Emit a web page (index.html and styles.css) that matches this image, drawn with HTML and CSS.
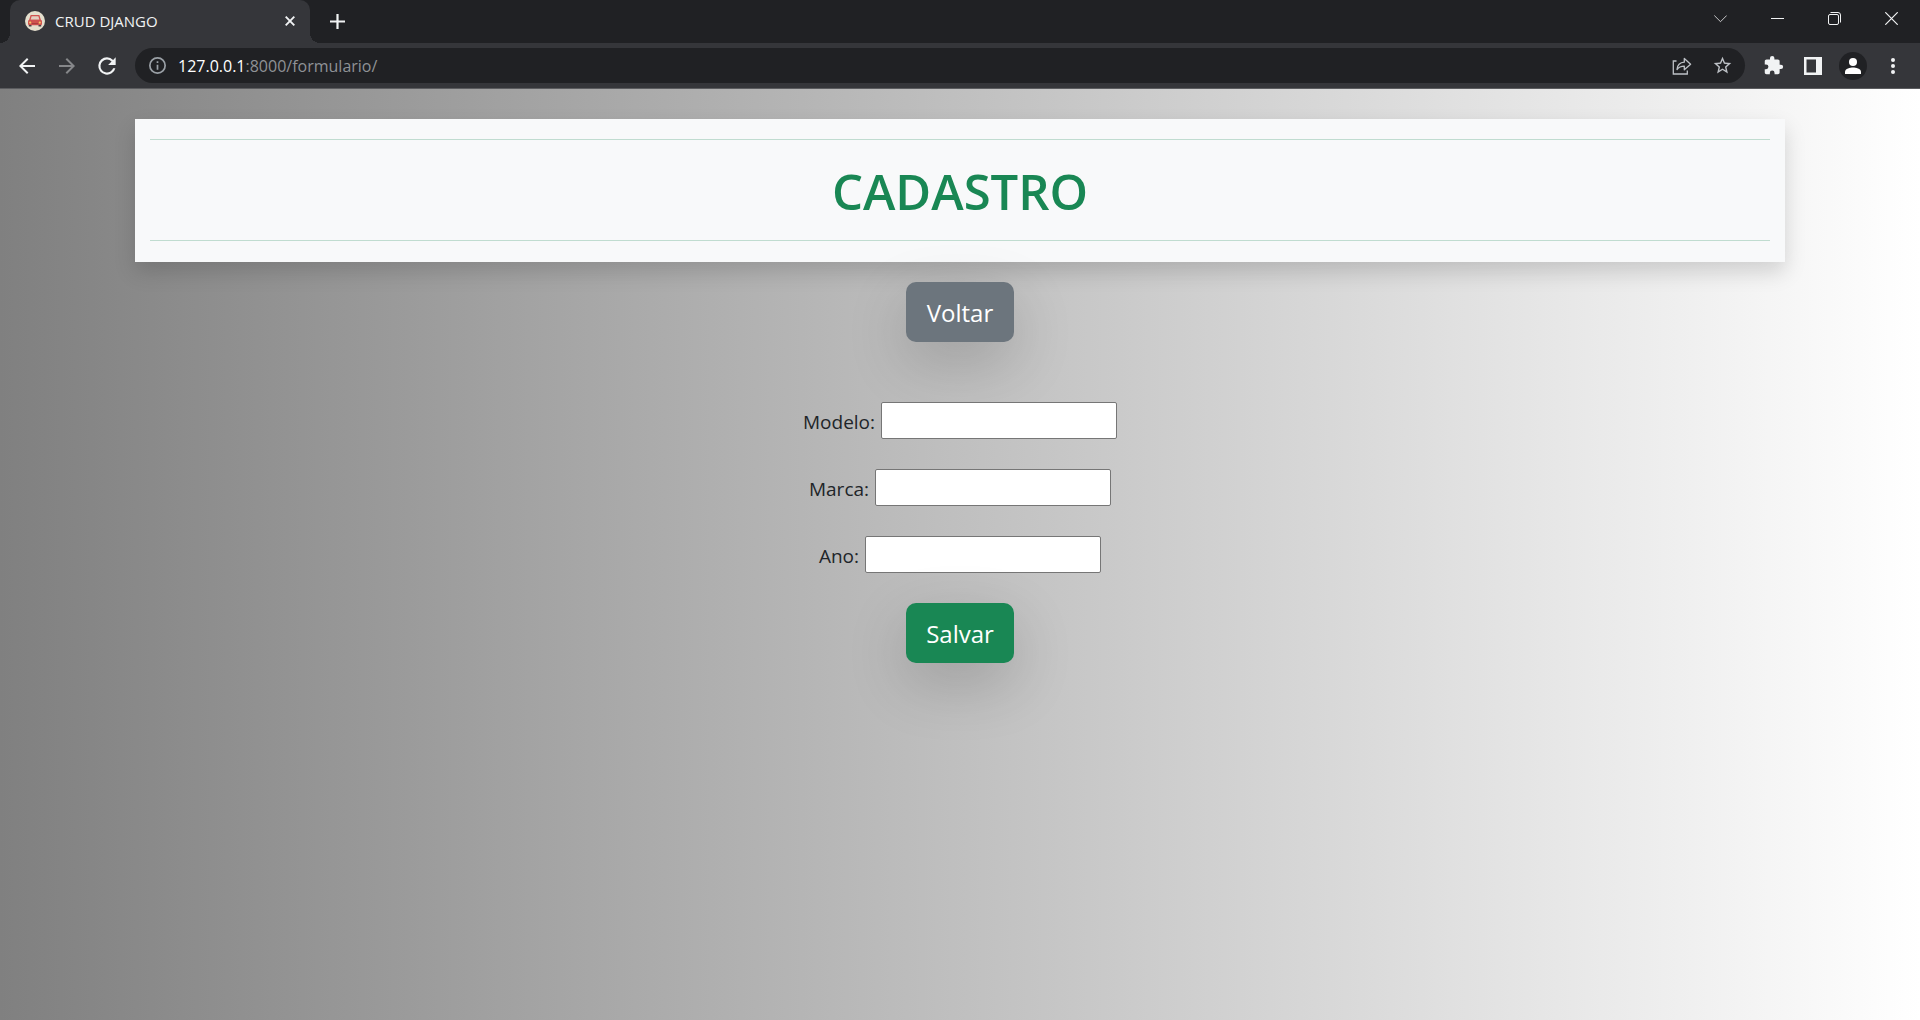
FILE: index.html
```
<!DOCTYPE html>
<html lang="pt-br">
<head>
<meta charset="utf-8">
<meta name="viewport" content="width=device-width, initial-scale=1">
<title>CRUD DJANGO</title>
<link rel="stylesheet" href="styles.css">
</head>
<body>
<header class="browser">
  <div class="tab-strip">
    <div class="tab">
      <svg class="favicon" viewBox="0 0 20 20" aria-hidden="true">
        <circle cx="10" cy="10" r="10" fill="#e4dfcd"/>
        <path d="M5.600 4h8.800l1.500 5v.6H4.100V9z" fill="#d0524f"/>
        <path d="M6.600 5.200h6.800l1 3.600H5.600z" fill="#e3cfc0"/>
        <rect x="3" y="8.800" width="14" height="5.400" rx="1.500" fill="#d0524f"/>
        <path d="M3.800 14h2.700v1.500H3.800zM13.500 14h2.700v1.500h-2.700z" fill="#4d4145"/>
        <path d="M7 12.600h6" stroke="#a63c3e" stroke-width="1"/>
        <circle cx="5.200" cy="11.600" r="1.100" fill="#f2ca62"/>
        <circle cx="14.800" cy="11.600" r="1.100" fill="#f2ca62"/>
      </svg>
      <span class="tab-title">CRUD DJANGO</span>
      <button class="tab-close" type="button" aria-label="Fechar guia">
        <svg width="10" height="10" viewBox="0 0 10 10"><path d="M.7.7l8.600 8.600M9.300.7L.7 9.300" stroke="currentColor" stroke-width="1.900"/></svg>
      </button>
    </div>
    <button class="new-tab" type="button" aria-label="Nova guia">
      <svg width="15" height="15" viewBox="0 0 15 15"><path d="M7.500 0v15M0 7.500h15" stroke="currentColor" stroke-width="2.200"/></svg>
    </button>
    <div class="window-controls">
      <button type="button" aria-label="Pesquisar guias"><svg width="13" height="13" viewBox="0 0 13 13"><path d="M.3 3.500l6.200 6.200 6.200-6.200" fill="none" stroke="currentColor" stroke-width=".8"/></svg></button>
      <button type="button" aria-label="Minimizar"><svg width="13" height="13" viewBox="0 0 13 13"><path d="M0 6.500h13" stroke="currentColor"/></svg></button>
      <button type="button" aria-label="Restaurar"><svg width="13" height="13" viewBox="0 0 13 13"><g fill="none" stroke="currentColor"><rect x=".5" y="2.500" width="10" height="10" rx="1.500"/><path d="M2.500.5H10A2.500 2.500 0 0 1 12.500 3v7.500"/></g></svg></button>
      <button type="button" aria-label="Fechar"><svg width="13" height="13" viewBox="0 0 13 13"><path d="M.3.300l12.400 12.400M12.700.3L.3 12.700" stroke="currentColor" stroke-width="1.200"/></svg></button>
    </div>
  </div>
  <nav class="toolbar" aria-label="Navegação">
    <div class="tools">
      <button type="button" aria-label="Voltar"><svg width="24" height="24" viewBox="0 0 24 24"><path d="M20 11H7.830l5.590-5.590L12 4l-8 8 8 8 1.410-1.410L7.830 13H20z" fill="currentColor"/></svg></button>
      <button class="is-off" type="button" aria-label="Avançar"><svg width="24" height="24" viewBox="0 0 24 24"><path d="M12 4l-1.410 1.410L16.170 11H4v2h12.170l-5.580 5.590L12 20l8-8z" fill="currentColor"/></svg></button>
      <button type="button" aria-label="Recarregar"><svg width="26" height="26" viewBox="0 0 24 24"><path d="M17.650 6.350A7.960 7.960 0 0 0 12 4a8 8 0 1 0 7.730 10h-2.080A6 6 0 1 1 12 6c1.660 0 3.140.69 4.220 1.780L13 11h7V4z" fill="currentColor"/></svg></button>
    </div>
    <div class="omnibox">
      <svg class="info" width="17" height="17" viewBox="2 2 20 20" aria-hidden="true"><path d="M11 7h2v2h-2zm0 4h2v6h-2zm1-9a10 10 0 1 0 0 20 10 10 0 0 0 0-20zm0 18a8 8 0 1 1 0-16 8 8 0 0 1 0 16z" fill="currentColor"/></svg>
      <span class="url"><span class="host">127.0.0.1</span>:8000/formulario/</span>
      <button type="button" aria-label="Compartilhar"><svg width="20" height="20" viewBox="0 0 20 20"><g fill="none" stroke="currentColor" stroke-width="1.300"><path d="M4.500 5H1.300v13h14v-3.500"/><path d="M5 13.500c.4-4.800 3-7 7.300-7.300V2.500l6.300 5.800-6.300 5.500V10.200c-3.300 0-5.500.8-7.300 3.300z" stroke-linejoin="round"/></g></svg></button>
      <button type="button" aria-label="Favoritar"><svg width="21" height="21" viewBox="0 0 24 24"><path d="M22 9.240l-7.190-.62L12 2 9.190 8.630 2 9.240l5.460 4.730L5.820 21 12 17.270 18.180 21l-1.630-7.030zM12 15.400l-3.760 2.270 1-4.280-3.320-2.880 4.380-.38L12 6.100l1.710 4.040 4.380.38-3.320 2.880 1 4.280z" fill="currentColor"/></svg></button>
    </div>
    <div class="tools">
      <button type="button" aria-label="Extensões"><svg width="21" height="21" viewBox="0 0 24 24"><path d="M20.500 11H19V7c0-1.100-.9-2-2-2h-4V3.500a2.500 2.500 0 0 0-5 0V5H4c-1.100 0-1.990.9-1.990 2v3.800H3.500a2.700 2.700 0 0 1 0 5.400H2V20c0 1.100.9 2 2 2h3.800v-1.500a2.700 2.700 0 0 1 5.400 0V22H17c1.100 0 2-.9 2-2v-4h1.500a2.500 2.500 0 0 0 0-5z" fill="currentColor"/></svg></button>
      <button type="button" aria-label="Painel lateral"><svg width="18" height="18" viewBox="0 0 18 18"><path d="M0 0h18v18H0zM2.500 2.500v13H12v-13z" fill="currentColor" fill-rule="evenodd"/></svg></button>
      <button type="button" aria-label="Perfil"><svg width="28" height="28" viewBox="0 0 28 28"><circle cx="14" cy="14" r="14" fill="#202124"/><circle cx="14" cy="10" r="4" fill="#fff"/><path d="M6 22v-2.200C6 16.800 11.300 15.500 14 15.500s8 1.300 8 4.300V22z" fill="#fff"/></svg></button>
      <button type="button" aria-label="Menu"><svg width="6" height="18" viewBox="0 0 6 18"><g fill="currentColor"><circle cx="3" cy="3" r="2"/><circle cx="3" cy="9" r="2"/><circle cx="3" cy="15" r="2"/></g></svg></button>
    </div>
  </nav>
</header>
<main class="page">
  <div class="banner">
    <hr>
    <h1>CADASTRO</h1>
    <hr>
  </div>
  <button class="btn btn-back" type="button">Voltar</button>
  <form class="form">
    <div class="field"><label for="modelo">Modelo:</label><input id="modelo" name="modelo" type="text"></div>
    <div class="field"><label for="marca">Marca:</label><input id="marca" name="marca" type="text"></div>
    <div class="field"><label for="ano">Ano:</label><input id="ano" name="ano" type="text"></div>
    <button class="btn btn-save" type="submit">Salvar</button>
  </form>
</main>
</body>
</html>
```
FILE: styles.css
```
* {
  box-sizing: border-box;
}

body {
  margin: 0;
  min-height: 100vh;
  display: flex;
  flex-direction: column;
  font-family: "Segoe UI", "Open Sans", "Noto Sans", sans-serif;
  color: #212529;
}

button {
  font: inherit;
  border: 0;
  padding: 0;
  background: none;
}

svg {
  display: block;
}

/* Browser frame */
.browser {
  background: #35363a;
  border-bottom: 1px solid #5b5c5f;
  color: #f1f3f4;
}

.browser button {
  display: flex;
  align-items: center;
  justify-content: center;
  color: inherit;
}

.tab-strip {
  display: flex;
  height: 43px;
  padding-left: 10px;
  background: #202124;
}

.tab {
  position: relative;
  display: flex;
  align-items: center;
  gap: 10px;
  width: 300px;
  padding: 0 15px 1px;
  border-radius: 10px 10px 0 0;
  background: #35363a;
}

.tab::before,
.tab::after {
  content: "";
  position: absolute;
  bottom: 0;
  width: 10px;
  height: 10px;
}

.tab::before {
  left: -10px;
  background: radial-gradient(circle at 0 0, #202124 10px, #35363a 10px);
}

.tab::after {
  right: -10px;
  background: radial-gradient(circle at 100% 0, #202124 10px, #35363a 10px);
}

.favicon {
  width: 20px;
  height: 20px;
}

.tab-title {
  flex: 1;
  font-size: 15px;
  line-height: 20px;
}

.new-tab {
  width: 54px;
}

.window-controls {
  display: flex;
  height: 36px;
  margin-left: auto;
}

.window-controls button {
  width: 57px;
}

.toolbar {
  display: flex;
  align-items: center;
  gap: 8px;
  height: 45px;
  padding: 0 7px;
}

.tools {
  display: flex;
}

.tools button,
.omnibox button {
  width: 40px;
  height: 35px;
}

.tools .is-off {
  color: #86878a;
}

.omnibox {
  flex: 1;
  display: flex;
  align-items: center;
  height: 35px;
  padding: 0 3px 0 14px;
  border-radius: 18px;
  background: #202124;
  color: #bdc1c6;
}

.info {
  color: #9aa0a6;
}

.url {
  flex: 1;
  padding-left: 12px;
  font-size: 16px;
  color: #8f9296;
}

.host {
  color: #fff;
}

/* Page */
.page {
  flex: 1;
  display: flex;
  flex-direction: column;
  align-items: center;
  padding: 30px 15px;
  background: linear-gradient(to right, #808080, #fff);
}

.banner {
  width: 100%;
  max-width: 1650px;
  padding: 20px 15px 21px;
  background: #f8f9fa;
  box-shadow: 0 10px 20px rgba(0, 0, 0, .15);
  color: #198754;
  text-align: center;
}

.banner hr {
  height: 1px;
  margin: 0;
  border: 0;
  color: inherit;
  background: currentColor;
  opacity: .25;
}

.banner h1 {
  margin: 21px 0 19px;
  font-size: 49px;
  font-weight: 600;
  line-height: 60px;
}

.btn {
  width: 108px;
  height: 60px;
  border-radius: 10px;
  box-shadow: 0 20px 60px rgba(0, 0, 0, .175);
  color: #fff;
  font-size: 24px;
}

.btn-back {
  margin-top: 20px;
  background: #6c757d;
}

.btn-save {
  background: #198754;
}

.form {
  display: flex;
  flex-direction: column;
  align-items: center;
  gap: 30px;
  margin: 60px 0 0;
}

.field {
  display: flex;
  align-items: baseline;
  gap: 6px;
  font-size: 19px;
}

.field input {
  width: 236px;
  height: 37px;
  padding: 3px 2px 1px;
  border: 1px solid #767676;
  border-radius: 2px;
  background: #fff;
  font: inherit;
}
```
